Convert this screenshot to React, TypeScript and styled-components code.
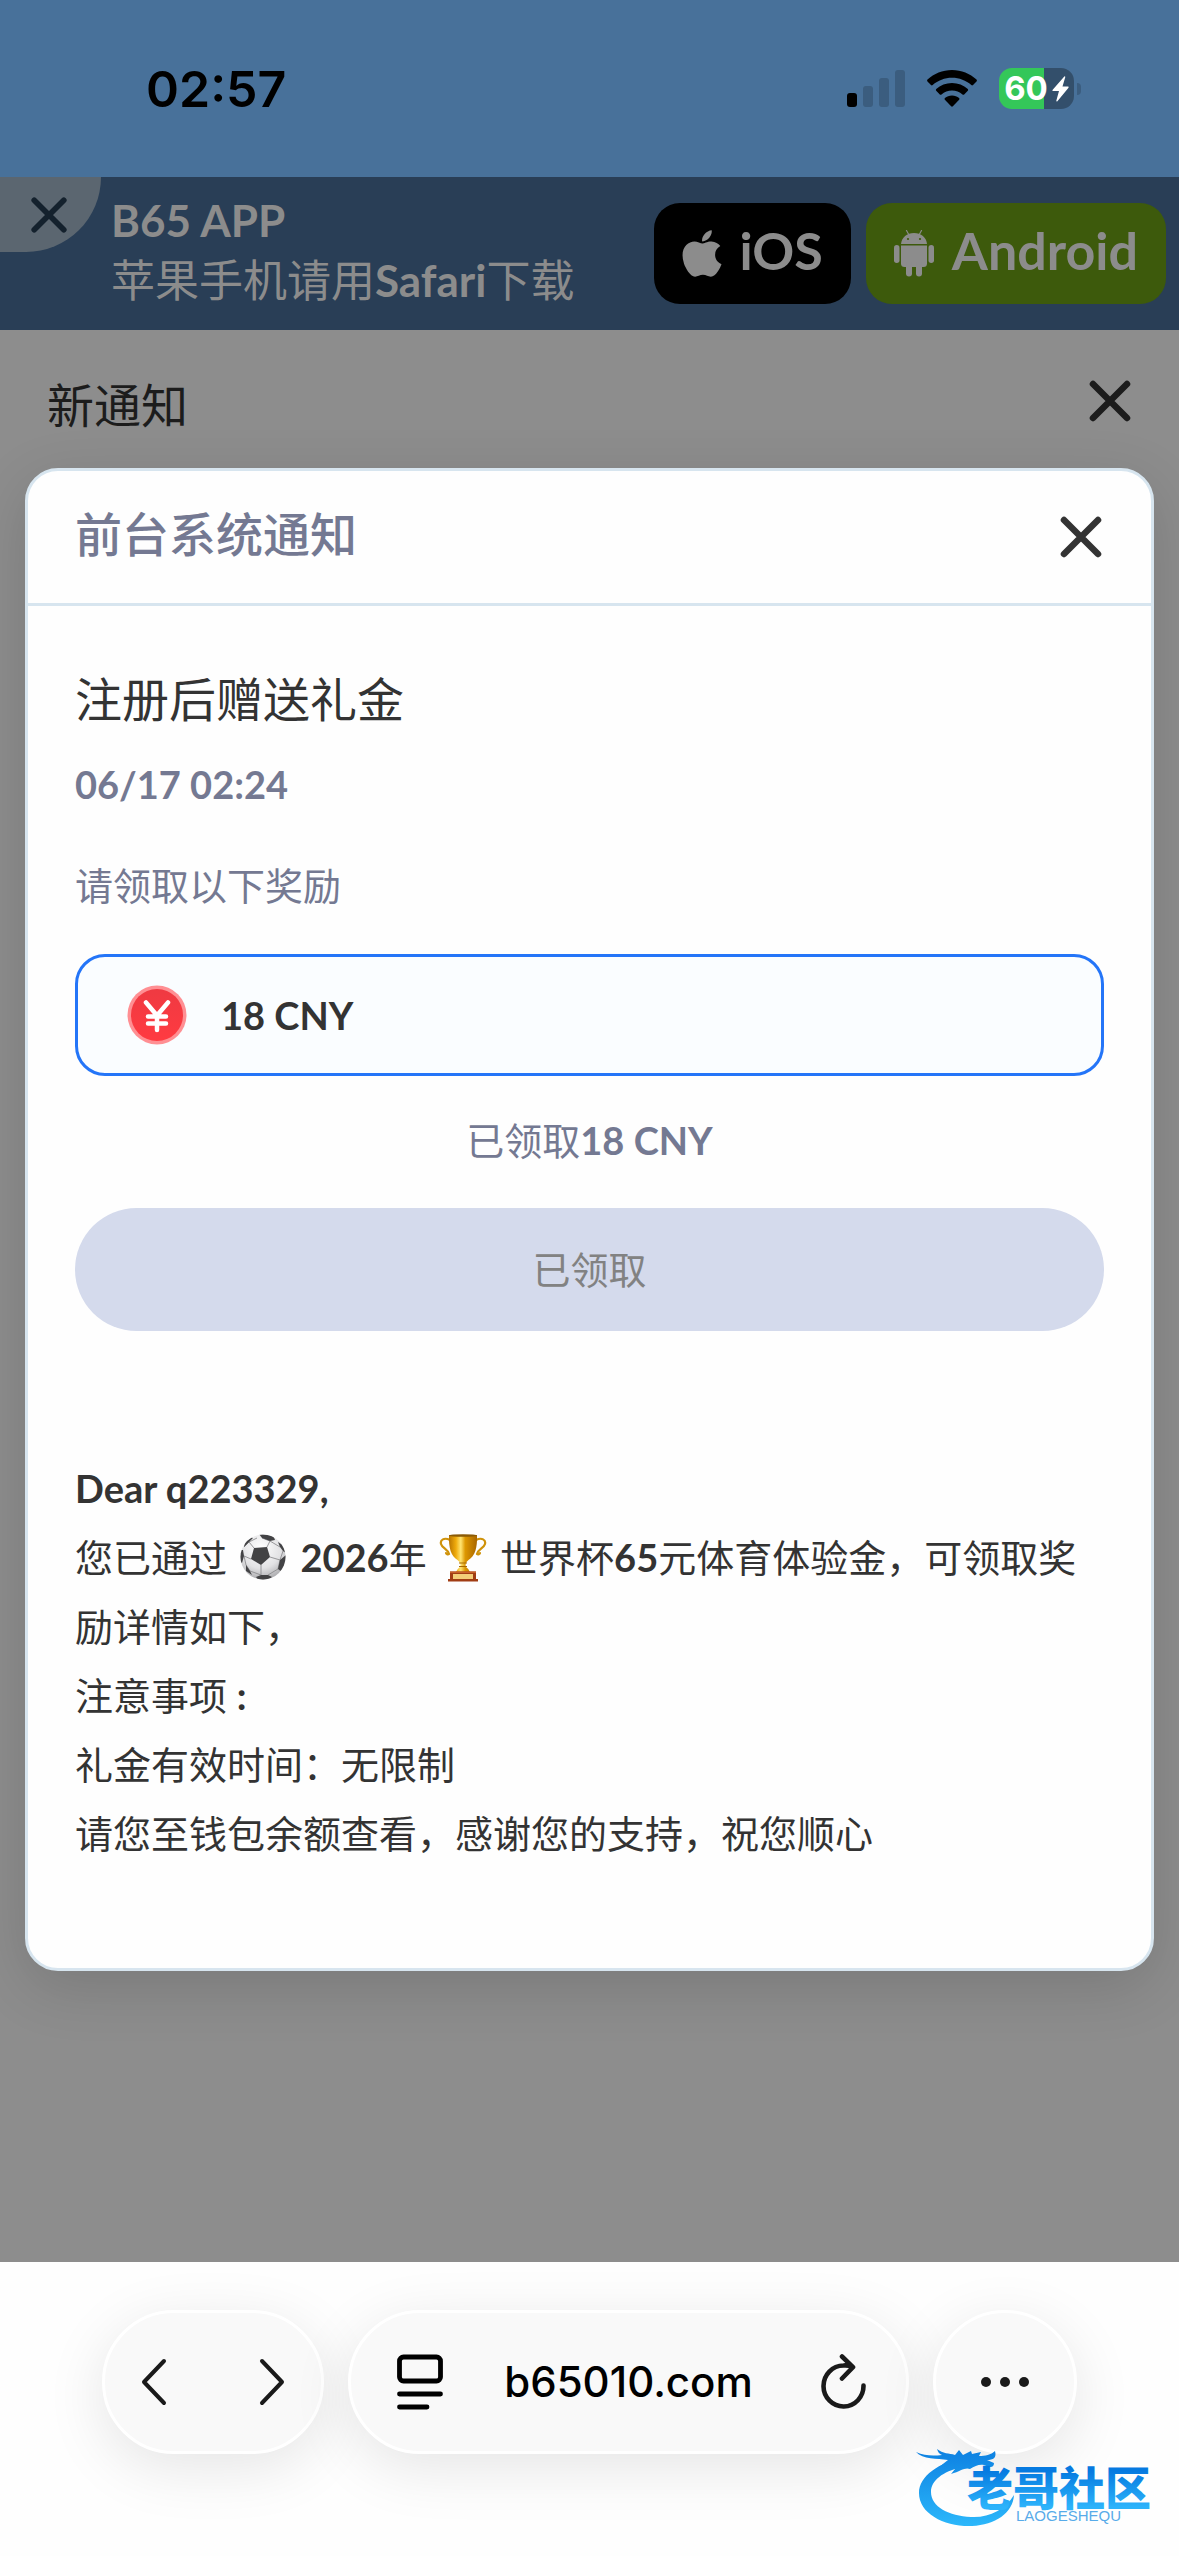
import styled, { createGlobalStyle } from 'styled-components';
import { FaApple } from 'react-icons/fa';

const GlobalStyle = createGlobalStyle`
  * {
    box-sizing: border-box;
  }
  body {
    margin: 0;
    background: #8d8d8d;
    color: #333333;
    font-family: Lato, 'Noto Sans CJK SC', sans-serif;
    font-size: 38px;
  }
  h1, h2, h3, p {
    margin: 0;
  }
  button {
    font: inherit;
    color: inherit;
    border: none;
    background: none;
    padding: 0;
    cursor: pointer;
  }
  svg {
    display: block;
    flex: none;
  }
`

const Screen = styled.div`
  display: flex;
  flex-direction: column;
  min-height: 100vh;
`

/* status bar */

const StatusBar = styled.header`
  display: flex;
  justify-content: space-between;
  align-items: center;
  height: 177px;
  padding: 0 98px 0 146px;
  background: #48719a;
`
const Time = styled.time`
  font-family: Inter, sans-serif;
  font-size: 50px;
  font-weight: 600;
  line-height: 60px;
  color: #000;
`
const StatusIcons = styled.div`
  display: flex;
  align-items: center;
  gap: 22px;
`
const Battery = styled.div`
  display: flex;
  align-items: center;
  gap: 3px;
`
const BatteryBody = styled.div`
  display: flex;
  justify-content: center;
  align-items: center;
  gap: 4px;
  width: 75px;
  height: 41px;
  border-radius: 13px;
  background: linear-gradient(90deg, #34c759 60%, #334f6b 60%);
  color: #fff;
  font-family: Inter, sans-serif;
  font-size: 33px;
  font-weight: 700;
  line-height: 41px;
`
const BatteryTip = styled.div`
  width: 4px;
  height: 12px;
  border-radius: 0 4px 4px 0;
  background: #3b5d7f;
`

/* download banner */

const Banner = styled.section`
  display: flex;
  align-items: center;
  height: 153px;
  padding-right: 13px;
  background: #293e56;
  color: #8c8c8c;
`
const BannerClose = styled.button`
  display: flex;
  justify-content: center;
  align-items: center;
  align-self: flex-start;
  width: 101px;
  height: 75px;
  padding-right: 4px;
  border-radius: 0 0 75px 0;
  background: #5b6670;
  color: #14212d;
`
const BannerText = styled.div`
  flex: 1;
  padding: 0 0 8px 10px;
  font-size: 44px;
  line-height: 60px;
`
const StoreLinks = styled.nav`
  display: flex;
  gap: 15px;
`
const StoreLink = styled.a<{ $color: string }>`
  display: flex;
  align-items: center;
  gap: 18px;
  height: 101px;
  padding: 0 28px;
  border-radius: 26px;
  background: ${({ $color }) => $color};
  color: #8c8c8c;
  font-size: 52px;
  font-weight: 700;
  line-height: 60px;
  text-decoration: none;
`
const AppleIcon = styled(FaApple)`
  width: 40px;
  height: 53px;
`
const StoreName = styled.span`
  padding-bottom: 8px;
`

/* notification page */

const Page = styled.main`
  flex: 1;
`
const PageHeader = styled.div`
  display: flex;
  justify-content: space-between;
  align-items: center;
  height: 138px;
  padding: 4px 46px 0 47px;
  color: #1c1c1c;
`
const PageTitle = styled.h1`
  padding-top: 8px;
  font-size: 47px;
  font-weight: 400;
  line-height: 66px;
`
const Modal = styled.section`
  margin: 0 25px;
  border: 3px solid #d7e5ef;
  border-radius: 33px;
  background: #fefefe;
  box-shadow: 0 16px 60px rgba(0, 0, 0, 0.14);
`
const ModalHeader = styled.div`
  display: flex;
  justify-content: space-between;
  align-items: center;
  height: 135px;
  padding: 0 47px;
  border-bottom: 3px solid #d7e5ef;
`
const ModalTitle = styled.h2`
  padding-bottom: 6px;
  color: #747992;
  font-size: 47px;
  font-weight: 500;
  line-height: 66px;
`
const ModalBody = styled.div`
  display: flex;
  flex-direction: column;
  padding: 60px 47px 100px;
`
const Subject = styled.h3`
  font-size: 47px;
  font-weight: 400;
  line-height: 66px;
`
const Note = styled.p<{ $top: number; $center?: boolean }>`
  margin-top: ${({ $top }) => $top}px;
  color: #747992;
  line-height: 54px;
  text-align: ${({ $center }) => ($center ? 'center' : 'left')};
`
const Reward = styled.div`
  display: flex;
  align-items: center;
  gap: 34px;
  height: 122px;
  margin-top: 42px;
  padding: 0 49px;
  border: 3px solid #2475f8;
  border-radius: 30px;
  background: #fafdff;
`
const ClaimButton = styled.button`
  height: 123px;
  margin-top: 41px;
  padding-bottom: 4px;
  border-radius: 62px;
  background: #d4daec;
  color: #828282;
`
const Message = styled.div`
  margin-top: 123px;
  line-height: 69px;
`
const Emoji = styled.svg`
  display: inline-block;
  width: 48px;
  height: 48px;
  margin: 0 3px;
  vertical-align: -10px;
`

/* browser toolbar */

const Toolbar = styled.footer`
  position: relative;
  display: flex;
  gap: 24px;
  padding: 48px 102px 102px;
  background: #fefefe;
  overflow: hidden;
`
const Pill = styled.div<{ $width?: number; $pad?: number }>`
  display: flex;
  justify-content: ${({ $pad }) => ($pad ? 'space-between' : 'center')};
  align-items: center;
  flex: ${({ $width }) => ($width ? `0 0 ${$width}px` : '1')};
  height: 144px;
  padding: 0 ${({ $pad }) => $pad || 0}px;
  border: 3px solid #fff;
  border-radius: 72px;
  background: #f9f9f9;
  box-shadow: 0 14px 60px rgba(0, 0, 0, 0.1);
  color: #1a1a1a;
`
const Address = styled.button`
  font-family: Inter, sans-serif;
  font-size: 42px;
  font-weight: 500;
  line-height: 54px;
  color: #000;
`
const Watermark = styled.svg`
  position: absolute;
  right: 14px;
  bottom: 26px;
`

const CloseIcon = ({ size = 46 }: { size?: number }) => (
  <svg width={size} height={size} viewBox="0 0 46 46" stroke="currentColor" strokeWidth="6.5" strokeLinecap="round">
    <path d="M6 6L40 40M40 6L6 40" />
  </svg>
)

const SignalIcon = () => (
  <svg width="58" height="38" viewBox="0 0 58 38">
    <rect x="0" y="23" width="10" height="14" rx="3" />
    <g fill="#3b5d7f">
      <rect x="16" y="16" width="10" height="21" rx="3" />
      <rect x="32" y="8" width="10" height="29" rx="3" />
      <rect x="48" y="0" width="10" height="37" rx="3" />
    </g>
  </svg>
)

const WifiIcon = () => (
  <svg width="50" height="38" viewBox="0 0 50 38">
    <path d="M25 0C34.500 0 43 3.700 49.500 9.600Q50.300 10.500 49.500 11.400L46 15Q45.200 15.800 44.300 15C39 10.400 32.300 7.800 25 7.800S11 10.400 5.700 15Q4.800 15.800 4 15L.5 11.400Q-.3 10.500.5 9.600C7 3.700 15.500 0 25 0Z" />
    <path d="M25 13C31 13 36.500 15.300 40.800 19Q41.600 19.900 40.800 20.800L37.200 24.400Q36.400 25.100 35.500 24.400C32.600 22 29 20.600 25 20.600S17.400 22 14.500 24.400Q13.600 25.100 12.800 24.400L9.200 20.800Q8.400 19.900 9.200 19C13.500 15.300 19 13 25 13Z" />
    <path d="M25 25.600C27.700 25.600 30.200 26.500 32.100 28Q32.900 28.900 32.100 29.800L25.900 36.300Q25 37.100 24.100 36.300L17.900 29.800Q17.100 28.900 17.900 28C19.800 26.500 22.300 25.600 25 25.600Z" />
  </svg>
)

const BoltIcon = () => (
  <svg width="17" height="26" viewBox="0 0 17 26" fill="#fff">
    <path d="M12.300.4L.5 14Q0 15 1 15H7L4.300 24.800Q4.400 26 5.400 25.200L16.500 11.700Q17 10.700 16 10.600H10.500L13.300 1Q13.200 0 12.300.4Z" />
  </svg>
)

const AndroidIcon = () => (
  <svg width="40" height="47" viewBox="0 0 40 47" fill="currentColor">
    <path d="M12.500.5L15 5M27.500.5L25 5" stroke="currentColor" strokeWidth="1.200" strokeLinecap="round" />
    <path d="M7 14C7.500 7.500 13 3 20 3S32.500 7.500 33 14Z" />
    <path d="M7 15.500H33V33.500Q33 37 29.500 37H10.500Q7 37 7 33.500Z" />
    <rect x="0" y="15" width="5.500" height="18" rx="2.700" />
    <rect x="34.500" y="15" width="5.500" height="18" rx="2.700" />
    <rect x="12" y="32" width="6" height="14.500" rx="3" />
    <rect x="22" y="32" width="6" height="14.500" rx="3" />
    <circle cx="14" cy="9" r="1.100" fill="#3d5a0c" />
    <circle cx="26" cy="9" r="1.100" fill="#3d5a0c" />
  </svg>
)

const YuanIcon = () => (
  <svg width="60" height="60" viewBox="0 0 60 60">
    <defs>
      <linearGradient id="coin" x1="0" y1="0" x2="0" y2="1">
        <stop offset="0" stopColor="#ef3a42" />
        <stop offset="1" stopColor="#ff3a41" />
      </linearGradient>
    </defs>
    <circle cx="30" cy="30" r="29.500" fill="#ff8f93" />
    <circle cx="30" cy="30" r="26" fill="url(#coin)" />
    <path d="M19 17.500L30 30.500L41 17.500M30 30.500V45M21 31.500H39M21 38.500H39" fill="none" stroke="#fff" strokeWidth="4.500" strokeLinecap="round" strokeLinejoin="round" />
  </svg>
)

const Football = () => (
  <Emoji viewBox="0 0 48 48" role="img" aria-label="足球">
    <defs>
      <radialGradient id="ball" cx="0.45" cy="0.3" r="0.75">
        <stop offset="0" stopColor="#ffffff" />
        <stop offset="0.6" stopColor="#e2e2e4" />
        <stop offset="1" stopColor="#a3a3a6" />
      </radialGradient>
      <clipPath id="ballEdge">
        <circle cx="23" cy="23" r="22.500" />
      </clipPath>
    </defs>
    <circle cx="23" cy="23" r="22.500" fill="url(#ball)" />
    <g clipPath="url(#ballEdge)">
      <g fill="none" stroke="#8d8d90" strokeWidth="0.900">
        <path d="M14 14L9 8M27 13L30 7M30 23L40 26M21 31L21 41M11 25L4 22M9 8L4 13M30 7L40 13M40 26L38 35M21 41L10 37M4 22L6 31L10 37M28 41L38 35M40 26L43 17M17 4L9 8M22 4L30 7" />
      </g>
      <g fill="#434345">
        <path d="M14 14L27 13L30 23L21 31L11 25Z" />
        <path d="M19 0L33 1L35 6L30 7L22 4Z" />
        <path d="M5 8L10 3L13 4L9 8L4 13Z" />
        <path d="M0 16L3 16L4 22L2 29L0 28Z" />
        <path d="M40 26L46 21V32L42 38L38 35Z" />
        <path d="M40 13L38 8L44 12L46 19L43 17Z" />
        <path d="M16 43L21 41L28 41L32 43L28 46H18Z" />
        <path d="M6 31L10 37L12 41L6 37Z" />
      </g>
    </g>
  </Emoji>
)

const Trophy = () => (
  <Emoji viewBox="0 0 48 48" role="img" aria-label="奖杯">
    <defs>
      <linearGradient id="gold" x1="0" x2="1">
        <stop offset="0" stopColor="#b87400" />
        <stop offset="0.25" stopColor="#f0ac0c" />
        <stop offset="0.42" stopColor="#ffe471" />
        <stop offset="0.58" stopColor="#dd9700" />
        <stop offset="1" stopColor="#a86500" />
      </linearGradient>
    </defs>
    <g fill="none" stroke="#cf920a" strokeWidth="2.200" strokeLinecap="round">
      <path d="M11 6C5 3 1 6 2 10C3 14 9 15 10 20C9 21 7 20 7 19" />
      <path d="M37 6C43 3 47 6 46 10C45 14 39 15 38 20C39 21 41 20 41 19" />
    </g>
    <path d="M10 1H38C38.500 14 36 22 29.500 26C26.500 28 26 31 27 33Q30 35 31 38H17Q18 35 21 33C22 31 21.500 28 18.500 26C12 22 9.500 14 10 1Z" fill="url(#gold)" />
    <ellipse cx="24" cy="1.500" rx="14" ry="1.300" fill="#8a5a06" />
    <path d="M20 29H28M20 32.500H28" stroke="#a86a00" strokeWidth="1.200" />
    <path d="M11 37.500H37V45H39V47.500H9V45H11Z" fill="#a13d14" />
    <path d="M11 37.500H37V39H11Z" fill="#c6602a" />
    <path d="M14 40H34V45H14Z" fill="#f3cd78" />
  </Emoji>
)

const BackIcon = () => (
  <svg width="26" height="48" viewBox="0 0 26 48" fill="none" stroke="currentColor" strokeWidth="4" strokeLinecap="round" strokeLinejoin="round">
    <path d="M23 3L3 24L23 45" />
  </svg>
)

const ForwardIcon = () => (
  <svg width="26" height="48" viewBox="0 0 26 48" fill="none" stroke="currentColor" strokeWidth="4" strokeLinecap="round" strokeLinejoin="round">
    <path d="M3 3L23 24L3 45" />
  </svg>
)

const PageMenuIcon = () => (
  <svg width="52" height="56" viewBox="0 0 52 56" fill="none" stroke="#000" strokeWidth="4.800" strokeLinecap="round">
    <rect x="8.500" y="3" width="41" height="24" rx="4" />
    <path d="M8.500 40H49.500M8.500 53H36" />
  </svg>
)

const ReloadIcon = () => (
  <svg width="52" height="56" viewBox="0 0 52 56" fill="none" stroke="currentColor" strokeWidth="4.600" strokeLinecap="round" strokeLinejoin="round">
    <path d="M49.500 31.500A20 20.500 0 1 1 29.500 11.500Q34 11 38.500 13M28 2.500L39 13.200L28 24.500" />
  </svg>
)

const MoreIcon = () => (
  <svg width="50" height="12" viewBox="0 0 50 12" fill="currentColor">
    <circle cx="6" cy="6" r="5" />
    <circle cx="25" cy="6" r="5" />
    <circle cx="44" cy="6" r="5" />
  </svg>
)

const DragonLogo = () => (
  <Watermark width="250" height="85" viewBox="0 0 250 85">
    <defs>
      <linearGradient id="sea" gradientUnits="userSpaceOnUse" x1="0" y1="0" x2="0" y2="82">
        <stop offset="0" stopColor="#0b7de0" />
        <stop offset="1" stopColor="#2cb8fb" />
      </linearGradient>
      <linearGradient id="name" gradientUnits="userSpaceOnUse" x1="0" y1="26" x2="0" y2="62">
        <stop offset="0" stopColor="#067ae0" />
        <stop offset="1" stopColor="#2cb3fb" />
      </linearGradient>
    </defs>
    <g fill="url(#sea)">
      <path d="M50 13C24 17 4 31 4 48C4 69 30 82 57 81C80 80 98 68 99 50C90 65 74 73 56 72C34 71 16 62 16 47C16 35 28 27 46 22Z" />
      <path d="M1 7C10 11 18 11 27 10C24 9 23 7 22 4C28 9 34 8 40 10L44 5L48 10L56 6L57 9L66 7L64 11C70 11 76 10 80 6C82 13 78 15 72 15L79 18C79 23 75 23 69 20C64 19 60 21 55 24C50 22 46 26 36 29L40 24L31 25L35 20L24 22L33 15C22 13 8 15 1 7Z" />
    </g>
    <text x="52" y="60" fill="url(#name)" fontFamily="'Noto Sans CJK SC', sans-serif" fontSize="46" fontWeight="900">老哥社区</text>
    <text x="101" y="76" fill="#58abe9" fontFamily="'Liberation Sans', sans-serif" fontSize="15">LAOGESHEQU</text>
  </Watermark>
)

const App = () => {
  return (
    <>
      <GlobalStyle />
      <Screen>
        <StatusBar>
          <Time>02:57</Time>
          <StatusIcons>
            <SignalIcon />
            <WifiIcon />
            <Battery>
              <BatteryBody>60<BoltIcon /></BatteryBody>
              <BatteryTip />
            </Battery>
          </StatusIcons>
        </StatusBar>

        <Banner>
          <BannerClose aria-label="关闭"><CloseIcon size={40} /></BannerClose>
          <BannerText>
            <p><b>B65 APP</b></p>
            <p>苹果手机请用<b>Safari</b>下载</p>
          </BannerText>
          <StoreLinks>
            <StoreLink href="#ios" $color="#000000">
              <AppleIcon />
              <StoreName>iOS</StoreName>
            </StoreLink>
            <StoreLink href="#android" $color="#3d5a0c">
              <AndroidIcon />
              <StoreName>Android</StoreName>
            </StoreLink>
          </StoreLinks>
        </Banner>

        <Page>
          <PageHeader>
            <PageTitle>新通知</PageTitle>
            <button aria-label="关闭"><CloseIcon /></button>
          </PageHeader>
          <Modal>
            <ModalHeader>
              <ModalTitle>前台系统通知</ModalTitle>
              <button aria-label="关闭"><CloseIcon /></button>
            </ModalHeader>
            <ModalBody>
              <Subject>注册后赠送礼金</Subject>
              <Note $top={25}><b>06/17 02:24</b></Note>
              <Note $top={47}>请领取以下奖励</Note>
              <Reward>
                <YuanIcon />
                <b>18 CNY</b>
              </Reward>
              <Note $top={37} $center>已领取<b>18 CNY</b></Note>
              <ClaimButton disabled>已领取</ClaimButton>
              <Message>
                <p><b>Dear q223329,</b></p>
                <p>您已通过 <Football /> <b>2026</b>年 <Trophy /> 世界杯<b>65</b>元体育体验金，可领取奖励详情如下，</p>
                <p>注意事项 <b>:</b></p>
                <p>礼金有效时间：无限制</p>
                <p>请您至钱包余额查看，感谢您的支持，祝您顺心</p>
              </Message>
            </ModalBody>
          </Modal>
        </Page>

        <Toolbar>
          <Pill $width={222} $pad={36}>
            <button aria-label="后退"><BackIcon /></button>
            <button aria-label="前进"><ForwardIcon /></button>
          </Pill>
          <Pill $pad={40}>
            <button aria-label="页面菜单"><PageMenuIcon /></button>
            <Address>b65010.com</Address>
            <button aria-label="重新载入"><ReloadIcon /></button>
          </Pill>
          <Pill $width={144}>
            <button aria-label="更多"><MoreIcon /></button>
          </Pill>
          <DragonLogo />
        </Toolbar>
      </Screen>
    </>
  );
};

export default App;
